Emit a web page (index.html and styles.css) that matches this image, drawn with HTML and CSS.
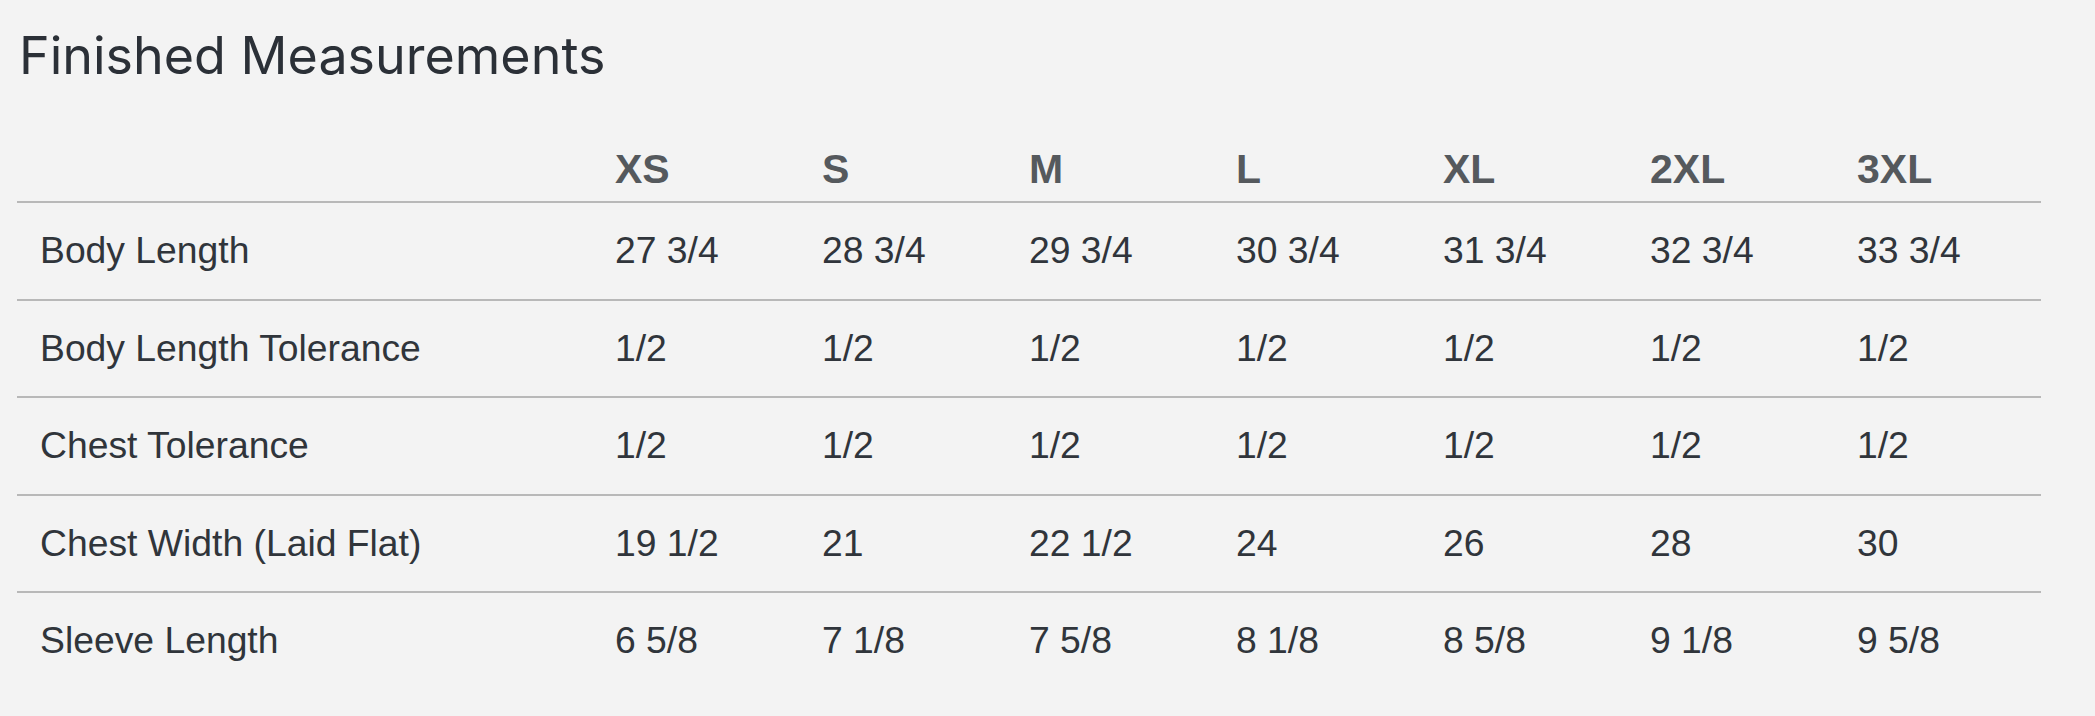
FILE: index.html
```html
<!DOCTYPE html>
<html lang="en">
<head>
<meta charset="utf-8">
<title>Finished Measurements</title>
<link rel="stylesheet" href="styles.css">
</head>
<body>
<main class="page">
  <h2 class="title">Finished Measurements</h2>
  <table class="sizes">
    <thead>
      <tr>
        <th class="label-col"></th>
        <th>XS</th><th>S</th><th>M</th><th>L</th><th>XL</th><th>2XL</th><th>3XL</th>
      </tr>
    </thead>
    <tbody>
      <tr>
        <td class="label">Body Length</td>
        <td>27 3/4</td><td>28 3/4</td><td>29 3/4</td><td>30 3/4</td><td>31 3/4</td><td>32 3/4</td><td>33 3/4</td>
      </tr>
      <tr>
        <td class="label">Body Length Tolerance</td>
        <td>1/2</td><td>1/2</td><td>1/2</td><td>1/2</td><td>1/2</td><td>1/2</td><td>1/2</td>
      </tr>
      <tr>
        <td class="label">Chest Tolerance</td>
        <td>1/2</td><td>1/2</td><td>1/2</td><td>1/2</td><td>1/2</td><td>1/2</td><td>1/2</td>
      </tr>
      <tr>
        <td class="label">Chest Width (Laid Flat)</td>
        <td>19 1/2</td><td>21</td><td>22 1/2</td><td>24</td><td>26</td><td>28</td><td>30</td>
      </tr>
      <tr>
        <td class="label">Sleeve Length</td>
        <td>6 5/8</td><td>7 1/8</td><td>7 5/8</td><td>8 1/8</td><td>8 5/8</td><td>9 1/8</td><td>9 5/8</td>
      </tr>
    </tbody>
  </table>
</main>
</body>
</html>
```
FILE: styles.css
```css
html, body {
  margin: 0;
  padding: 0;
  background: #f3f3f3;
}

.page {
  padding: 21px 0 0 17px;
}

.title {
  margin: 0 0 0 2px;
  font-family: "Inter", "Open Sans", sans-serif;
  font-weight: 400;
  font-size: 52px;
  line-height: 70px;
  color: #2b3037;
  letter-spacing: 0;
}

.sizes {
  border-collapse: collapse;
  table-layout: fixed;
  width: 2024px;
  margin-top: 55px;
  font-family: "Liberation Sans", Arial, sans-serif;
}

.sizes th,
.sizes td {
  text-align: left;
  padding: 0 0 0 23px;
  white-space: nowrap;
}

.sizes th {
  width: 184px;
  font-weight: 700;
  font-size: 41px;
  color: #55595d;
  height: 55px;
  vertical-align: top;
  border-bottom: 2px solid #b8b8b8;
}

.sizes th.label-col {
  width: 552px;
}

.sizes td {
  font-size: 37.3px;
  color: #30353b;
  height: 95.5px;
  border-bottom: 2px solid #b8b8b8;
}

.sizes tbody tr:last-child td {
  border-bottom: none;
}
```
